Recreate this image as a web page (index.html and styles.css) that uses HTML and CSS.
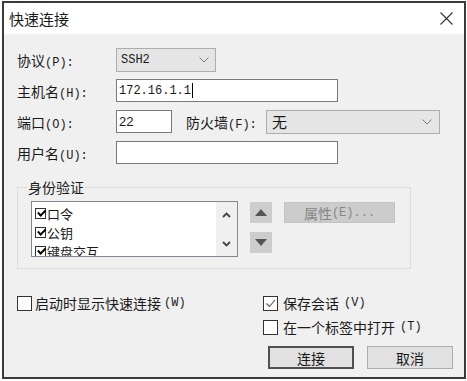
FILE: index.html
```html
<!DOCTYPE html>
<html lang="zh-CN">
<head>
  <meta charset="UTF-8" />
  <title>快速连接</title>
  <link rel="stylesheet" href="styles.css">
</head>
<body>
  <div class="window">
    <div class="titlebar">
      <span>快速连接</span>
      <svg class="close" width="13" height="13" viewBox="0 0 13 13">
        <path d="M0.5 0.5 L12.5 12.5 M12.5 0.5 L0.5 12.5" stroke="#333" stroke-width="1.1" fill="none"/>
      </svg>
    </div>

    <div class="content">
      <div class="form">
        <label>协议<span class="k">(P):</span></label>
        <div class="select sel-proto">
          <span class="mono">SSH2</span>
          <svg width="10" height="6" viewBox="0 0 10 6"><path d="M0.5 0.5 L5 5 L9.5 0.5" stroke="#7a7a7a" fill="none"/></svg>
        </div>

        <label>主机名<span class="k">(H):</span></label>
        <div class="input wide"><span class="mono">172.16.1.1</span><span class="caret"></span></div>

        <label>端口<span class="k">(O):</span></label>
        <div class="port-row">
          <div class="input port">22</div>
          <label class="fw-label">防火墙<span class="k">(F):</span></label>
          <div class="select sel-fw">
            <span>无</span>
            <svg width="10" height="6" viewBox="0 0 10 6"><path d="M0.5 0.5 L5 5 L9.5 0.5" stroke="#7a7a7a" fill="none"/></svg>
          </div>
        </div>

        <label>用户名<span class="k">(U):</span></label>
        <div class="input wide"></div>
      </div>

      <fieldset class="auth">
        <legend>身份验证</legend>
        <div class="auth-row">
          <div class="listbox">
            <div class="items">
              <div class="item"><span class="tick on"></span>口令</div>
              <div class="item"><span class="tick on"></span>公钥</div>
              <div class="item"><span class="tick on"></span>键盘交互</div>
            </div>
            <div class="scroll">
              <svg width="9" height="6" viewBox="0 0 9 6"><path d="M1 5 L4.5 1.5 L8 5" stroke="#444" stroke-width="1.8" fill="none"/></svg>
              <svg width="9" height="6" viewBox="0 0 9 6"><path d="M1 1 L4.5 4.5 L8 1" stroke="#444" stroke-width="1.8" fill="none"/></svg>
            </div>
          </div>
          <div class="movers">
            <div class="mover"><svg width="12" height="7" viewBox="0 0 12 7"><path d="M0 7 L6 0 L12 7 Z" fill="#555"/></svg></div>
            <div class="mover"><svg width="12" height="7" viewBox="0 0 12 7"><path d="M0 0 L12 0 L6 7 Z" fill="#555"/></svg></div>
          </div>
          <div class="btn disabled props">属性<span class="k">(E)...</span></div>
        </div>
      </fieldset>

      <div class="bottom">
        <div class="left-col">
          <div class="check"><span class="box"></span>启动时显示快速连接<span class="k">(W)</span></div>
        </div>
        <div class="right-col">
          <div class="check"><span class="box checked">
            <svg width="13" height="13" viewBox="0 0 13 13"><path d="M2.5 6.5 L5.5 9.5 L11 3" stroke="#555" stroke-width="1.1" fill="none"/></svg>
          </span>保存会话<span class="k">(V)</span></div>
          <div class="check"><span class="box"></span>在一个标签中打开<span class="k">(T)</span></div>
          <div class="buttons">
            <div class="btn default">连接</div>
            <div class="btn">取消</div>
          </div>
        </div>
      </div>
    </div>
  </div>
</body>
</html>
```

FILE: styles.css
```css
* { box-sizing: border-box; }
body {
  margin: 0;
  background: #fff;
  font-family: "Noto Sans CJK SC", sans-serif;
  font-size: 14px;
  color: #1a1a1a;
}

.window {
  width: 464px;
  height: 378px;
  margin: 1px 0 0 2px;
  border: 2px solid #3a3a3a;
  background: #f0f0f0;
  display: flex;
  flex-direction: column;
}

.titlebar {
  height: 31px;
  background: #fff;
  display: flex;
  align-items: center;
  justify-content: space-between;
  padding: 0 11px 0 5px;
  font-size: 15px;
}

.k {
  font-family: "Liberation Mono", monospace;
  font-size: 12px;
}

.mono {
  font-family: "Liberation Mono", monospace;
  font-size: 12px;
}

.content {
  padding: 10px 0 0 13px;
}

.form {
  display: grid;
  grid-template-columns: 99px 1fr;
  grid-auto-rows: 31px;
  align-items: center;
}

.select {
  height: 24px;
  background: #e5e5e5;
  border: 1px solid #adadad;
  display: flex;
  align-items: center;
  justify-content: space-between;
  padding: 0 6px 0 4px;
}
.sel-proto { width: 100px; }
.sel-fw { width: 174px; font-size: 15px; padding-left: 5px; padding-right: 7px; }

.input {
  height: 23px;
  background: #fff;
  border: 1px solid #7a7a7a;
  display: flex;
  align-items: center;
  padding-left: 2px;
}
.wide { width: 222px; }
.port { width: 56px; font-family: "Liberation Sans", sans-serif; font-size: 13px; }

.caret {
  width: 1px;
  height: 15px;
  background: #000;
  margin-left: 1px;
}

.port-row {
  display: flex;
  align-items: center;
}
.fw-label {
  width: 80px;
  margin-left: 14px;
}

.auth {
  width: 394px;
  margin: 9px 0 0;
  border: 1px solid #dcdcdc;
  padding: 4px 0 11px 13px;
}
.auth legend {
  margin-left: -4px;
  padding: 0 1px;
  line-height: 20px;
}

.auth-row {
  display: flex;
  align-items: flex-start;
}

.listbox {
  width: 207px;
  height: 56px;
  background: #fff;
  border: 1px solid #828790;
  display: flex;
}
.items {
  flex: 1;
  overflow: hidden;
  padding: 2px 0 0 3px;
  font-size: 13px;
}
.item {
  height: 19px;
  display: flex;
  align-items: center;
  gap: 1px;
}
.tick {
  width: 11px;
  height: 11px;
  border: 1px solid #333;
  background: #fff;
  position: relative;
}
.tick.on::after {
  content: "";
  position: absolute;
  left: 1px;
  top: 0;
  width: 6px;
  height: 3px;
  border-left: 2px solid #000;
  border-bottom: 2px solid #000;
  transform: rotate(-45deg) translate(0, 1px);
}
.scroll {
  width: 21px;
  background: #f0f0f0;
  display: flex;
  flex-direction: column;
  align-items: center;
  justify-content: space-between;
  padding: 10px 0 9px;
}

.movers {
  display: flex;
  flex-direction: column;
  gap: 9px;
  margin: 1px 0 0 12px;
}
.mover {
  width: 22px;
  height: 21px;
  background: #cdcdcd;
  display: flex;
  align-items: center;
  justify-content: center;
}

.btn {
  height: 23px;
  width: 86px;
  background: #e1e1e1;
  border: 1px solid #adadad;
  display: flex;
  align-items: center;
  justify-content: center;
}
.btn.props {
  width: 111px;
  height: 21px;
  margin: 1px 0 0 12px;
  background: #cccccc;
  border-color: #c4c4c4;
  color: #858585;
}
.btn.default {
  border: 2px solid #505050;
}

.bottom {
  display: flex;
  margin-top: 22px;
}
.left-col { width: 246px; }
.check {
  height: 24px;
  display: flex;
  align-items: center;
  gap: 3px;
}
.right-col .check { gap: 5px; }
.box {
  width: 15px;
  height: 15px;
  border: 1px solid #333;
  background: #fff;
  display: flex;
  align-items: center;
  justify-content: center;
}
.buttons {
  display: flex;
  gap: 13px;
  margin: 7px 0 0 5px;
}
```
